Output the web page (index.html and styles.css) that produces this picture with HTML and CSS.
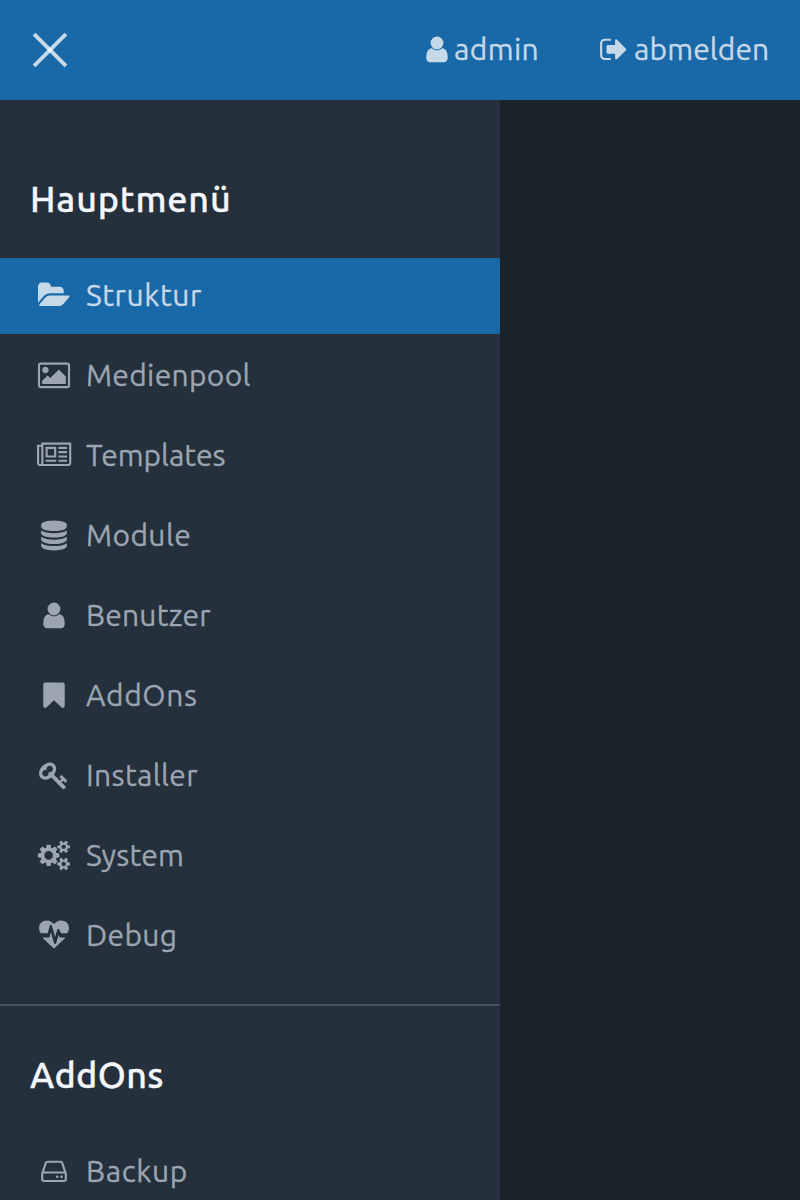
FILE: index.html
```
<!DOCTYPE html>
<html lang="de">
<head>
<meta charset="utf-8">
<title>Hauptmenü</title>
<link rel="stylesheet" href="styles.css">
</head>
<body>
<svg class="sprite" aria-hidden="true">
<symbol id="user" viewBox="0 0 1792 1792"><path d="M1536 1399q0 109-62.500 187t-150.500 78h-854q-88 0-150.500-78t-62.500-187q0-85 8.500-160.500t31.500-152 58.500-131 94-89 134.500-34.500q131 128 313 128t313-128q76 0 134.500 34.500t94 89 58.500 131 31.500 152 8.500 160.500zm-256-887q0 159-112.500 271.500t-271.500 112.500-271.500-112.500-112.500-271.500 112.500-271.500 271.500-112.500 271.500 112.500 112.500 271.500z"/></symbol>
</svg>
<header class="topbar">
<button class="close" aria-label="Menü schließen"><svg viewBox="0 0 36 36"><path d="M3 3 33 33"/><path d="M33 3 3 33"/></svg></button>
<nav class="meta">
<a class="account"><svg class="icon"><use href="#user"/></svg><span class="t-admin">admin</span></a>
<a class="logout"><svg class="icon" viewBox="0 0 1792 1792"><path d="M704 1440q0 4 1 20t.5 26.500-3 23.500-10 19.500-20.500 6.500h-320q-119 0-203.500-84.500t-84.500-203.500v-704q0-119 84.500-203.500t203.500-84.500h320q13 0 22.500 9.500t9.500 22.500q0 4 1 20t.5 26.500-3 23.500-10 19.500-20.500 6.500h-320q-66 0-113 47t-47 113v704q0 66 47 113t113 47h312l11.500 1 11.500 3 8 5.500 7 9 2 13.500zm928-544q0 26-19 45l-544 544q-19 19-45 19t-45-19-19-45v-288h-448q-26 0-45-19t-19-45v-384q0-26 19-45t45-19h448v-288q0-26 19-45t45-19 45 19l544 544q19 19 19 45z"/></svg><span class="t-abmelden">abmelden</span></a>
</nav>
</header>
<div class="page">
<aside class="sidebar">
<section class="group">
<h2 class="t-hauptmenu">Hauptmenü</h2>
<ul>
<li><a class="item active"><svg class="icon i-folder" viewBox="0 0 1792 1792"><path d="M1879 952q0 31-31 66l-336 396q-43 51-120.500 86.500t-143.500 35.500h-1088q-34 0-60.500-13t-26.500-43q0-31 31-66l336-396q43-51 120.500-86.500t143.500-35.500h1088q34 0 60.500 13t26.500 43zm-343-344v160h-832q-94 0-197 47.500t-164 119.500l-337 396-5 6q0-4-.5-12.500t-.5-12.500v-960q0-92 66-158t158-66h320q92 0 158 66t66 158v32h544q92 0 158 66t66 158z"/></svg><span class="t-struktur">Struktur</span></a></li>
<li><a class="item"><svg class="icon" viewBox="0 0 1792 1792"><path d="M576 576q0 80-56 136t-136 56-136-56-56-136 56-136 136-56 136 56 56 136zm1024 384v448h-1408v-192l320-320 160 160 512-512zm96-704h-1600q-13 0-22.500 9.500t-9.500 22.500v1216q0 13 9.500 22.500t22.500 9.500h1600q13 0 22.500-9.500t9.500-22.500v-1216q0-13-9.500-22.500t-22.500-9.500zm160 32v1216q0 66-47 113t-113 47h-1600q-66 0-113-47t-47-113v-1216q0-66 47-113t113-47h1600q66 0 113 47t47 113z"/></svg><span class="t-medienpool">Medienpool</span></a></li>
<li><a class="item"><svg class="icon i-news" viewBox="0 0 1792 1792"><path d="M1024 512h-384v384h384v-384zm128 640v128h-640v-128h640zm0-768v640h-640v-640h640zm640 768v128h-512v-128h512zm0-256v128h-512v-128h512zm0-256v128h-512v-128h512zm0-256v128h-512v-128h512zm-1536 960v-960h-128v960q0 26 19 45t45 19 45-19 19-45zm1664 0v-1088h-1536v1088q0 33-11 64h1483q26 0 45-19t19-45zm128-1216v1216q0 80-56 136t-136 56h-1664q-80 0-136-56t-56-136v-1088h256v-128h1792z"/></svg><span class="t-templates">Templates</span></a></li>
<li><a class="item"><svg class="icon" viewBox="0 0 1792 1792"><path d="M896 768q237 0 443-43t325-127v170q0 69-103 128t-280 93.500-385 34.500-385-34.500-280-93.500-103-128v-170q119 84 325 127t443 43zm0 768q237 0 443-43t325-127v170q0 69-103 128t-280 93.500-385 34.500-385-34.500-280-93.500-103-128v-170q119 84 325 127t443 43zm0-384q237 0 443-43t325-127v170q0 69-103 128t-280 93.500-385 34.500-385-34.500-280-93.500-103-128v-170q119 84 325 127t443 43zm0-1152q208 0 385 34.500t280 93.500 103 128v128q0 69-103 128t-280 93.500-385 34.500-385-34.500-280-93.500-103-128v-128q0-69 103-128t280-93.500 385-34.500z"/></svg><span class="t-module">Module</span></a></li>
<li><a class="item"><svg class="icon"><use href="#user"/></svg><span class="t-benutzer">Benutzer</span></a></li>
<li><a class="item"><svg class="icon" viewBox="0 0 1792 1792"><path d="M1420 128q23 0 44 9 33 13 52.500 41t19.500 62v1289q0 34-19.500 62t-52.500 41q-19 8-44 8-48 0-83-32l-441-424-441 424q-36 33-83 33-23 0-44-9-33-13-52.500-41t-19.500-62v-1289q0-34 19.500-62t52.500-41q21-9 44-9h1048z"/></svg><span class="t-addons">AddOns</span></a></li>
<li><a class="item"><svg class="icon" viewBox="0 0 1792 1792"><path d="M832 512q0-80-56-136t-136-56-136 56-56 136q0 42 19 83-41-19-83-19-80 0-136 56t-56 136 56 136 136 56 136-56 56-136q0-42-19-83 41 19 83 19 80 0 136-56t56-136zm851 704q0 17-49 66t-66 49q-9 0-28.500-16t-36.500-33-38.500-40-24.500-26l-96 96 220 220q28 28 28 68 0 42-39 81t-81 39q-40 0-68-28l-671-671q-176 131-365 131-163 0-265.500-102.500t-102.500-265.500q0-160 95-313t248-248 313-95q163 0 265.500 102.500t102.500 265.500q0 189-131 365l355 355 96-96q-3-3-26-24.500t-40-38.500-33-36.500-16-28.500q0-17 49-66t66-49q13 0 23 10 6 6 46 44.500t82 79.500 86.500 86 73 78 28.500 41z"/></svg><span class="t-installer">Installer</span></a></li>
<li><a class="item"><svg class="icon" viewBox="0 0 1792 1792"><path d="M832 896q0-106-75-181t-181-75-181 75-75 181 75 181 181 75 181-75 75-181zm768 512q0-52-38-90t-90-38-90 38-38 90q0 53 37.500 90.500t90.500 37.500 90.500-37.500 37.500-90.500zm0-1024q0-52-38-90t-90-38-90 38-38 90q0 53 37.500 90.500t90.500 37.500 90.500-37.500 37.500-90.500zm-384 421v185q0 10-7 19.500t-16 10.500l-155 24q-11 35-32 76 34 48 90 115 7 11 7 20 0 12-7 19-23 30-82.500 89.500t-78.500 59.500q-11 0-21-7l-115-90q-37 19-77 31-11 108-23 155-7 24-30 24h-186q-11 0-20-7.500t-10-17.500l-23-153q-34-10-75-31l-118 89q-7 7-20 7-11 0-21-8-144-133-144-160 0-9 7-19 10-14 41-53t47-61q-23-44-35-82l-152-24q-10-1-17-9.500t-7-19.500v-185q0-10 7-19.500t16-10.500l155-24q11-35 32-76-34-48-90-115-7-11-7-20 0-12 7-20 22-30 82-89t79-59q11 0 21 7l115 90q34-18 77-32 11-108 23-154 7-24 30-24h186q11 0 20 7.500t10 17.500l23 153q34 10 75 31l118-89q8-7 20-7 11 0 21 8 144 133 144 160 0 8-7 19-12 16-42 54t-45 60q23 48 34 82l152 23q10 2 17 10.500t7 19.500zm640 533v140q0 16-149 31-12 27-30 52 51 113 51 138 0 4-4 7-122 71-124 71-8 0-46-47t-52-68q-20 2-30 2t-30-2q-14 21-52 68t-46 47q-2 0-124-71-4-3-4-7 0-25 51-138-18-25-30-52-149-15-149-31v-140q0-16 149-31 13-29 30-52-51-113-51-138 0-4 4-7 4-2 35-20t59-34 30-16q8 0 46 46.500t52 67.500q20-2 30-2t30 2q51-71 92-112l6-2q4 0 124 70 4 3 4 7 0 25-51 138 17 23 30 52 149 15 149 31zm0-1024v140q0 16-149 31-12 27-30 52 51 113 51 138 0 4-4 7-122 71-124 71-8 0-46-47t-52-68q-20 2-30 2t-30-2q-14 21-52 68t-46 47q-2 0-124-71-4-3-4-7 0-25 51-138-18-25-30-52-149-15-149-31v-140q0-16 149-31 13-29 30-52-51-113-51-138 0-4 4-7 4-2 35-20t59-34 30-16q8 0 46 46.500t52 67.500q20-2 30-2t30 2q51-71 92-112l6-2q4 0 124 70 4 3 4 7 0 25-51 138 17 23 30 52 149 15 149 31z"/></svg><span class="t-system">System</span></a></li>
<li><a class="item"><svg class="icon" viewBox="0 0 1792 1792"><path d="M1280 1024h305q-5 6-10 10.500t-9 7.500l-3 4-623 600q-18 18-44 18t-44-18l-624-602q-5-2-21-20h369q22 0 39.500-13.500t22.500-34.500l70-281 190 667q6 20 23 33t39 13q21 0 38-13t23-33l146-485 56 112q18 35 57 35zm512-556q0 145-103 300h-369l-111-221q-8-17-25.500-27t-36.500-8q-45 5-56 46l-129 430-196-686q-6-20-23.500-33t-39.500-13-39 13.500-22 34.500l-116 464h-423q-103-155-103-300 0-220 127-344t351-124q62 0 126.500 21.500t120 58 95.500 68.500 76 68q36-36 76-68t95.500-68.500 120-58 126.500-21.500q224 0 351 124t127 344z"/></svg><span class="t-debug">Debug</span></a></li>
</ul>
</section>
<section class="group">
<h2 class="t-addons-title">AddOns</h2>
<ul>
<li><a class="item"><svg class="icon" viewBox="0 0 1792 1792"><path d="M1168 1216q0 33-23.500 56.500t-56.500 23.500-56.500-23.500-23.500-56.500 23.500-56.500 56.500-23.500 56.500 23.500 23.500 56.500zm256 0q0 33-23.500 56.500t-56.500 23.500-56.500-23.500-23.500-56.500 23.500-56.500 56.500-23.500 56.500 23.500 23.500 56.500zm112 160v-320q0-13-9.500-22.500t-22.500-9.500h-1216q-13 0-22.500 9.500t-9.500 22.500v320q0 13 9.500 22.500t22.500 9.500h1216q13 0 22.500-9.500t9.500-22.500zm-1230-480h1180l-157-482q-4-13-16-21.500t-26-8.500h-782q-14 0-26 8.500t-16 21.500zm1358 160v320q0 66-47 113t-113 47h-1216q-66 0-113-47t-47-113v-320q0-25 16-75l197-606q17-53 63-86t101-33h782q55 0 101 33t63 86l197 606q16 50 16 75z"/></svg><span class="t-backup">Backup</span></a></li>
</ul>
</section>
</aside>
</div>
</body>
</html>
```
FILE: styles.css
```
* { box-sizing: border-box; }
body { margin: 0; height: 1200px; overflow: hidden; background: #1b232a; font: 400 30px/40px Ubuntu, "Noto Sans", sans-serif; }
ul { list-style: none; margin: 0; padding: 0; display: flex; flex-direction: column; gap: 4px; }
.sprite { display: none; }
.topbar { height: 100px; background: #1968a8; color: #c6d9e9; display: flex; align-items: center; justify-content: space-between; padding: 0 31px 0 32px; }
.close { width: 36px; height: 36px; padding: 0; border: 0; background: none; }
.close svg { display: block; width: 36px; height: 36px; fill: none; stroke: rgba(255, 255, 255, .75); stroke-width: 4; stroke-linecap: square; }
.close path { transform: scale(.97); transform-origin: center; }
.meta { display: flex; padding-bottom: 2px; }
.account { display: flex; align-items: center; width: 177px; gap: 2px; }
.logout { display: flex; align-items: center; width: 170px; gap: 5px; }
.icon { flex: none; width: 30px; height: 30px; fill: currentColor; overflow: visible; transform: translateY(.4px); }
.page { height: 1100px; overflow: hidden; }
.sidebar { width: 500px; height: 1100px; overflow: hidden; background: #24303b; color: #9ca5b2; }
.group { padding-top: 79px; height: 904px; }
.group + .group { padding-top: 49px; border-top: 2px solid #47525e; height: auto; }
h2 { margin: 0 0 39px 30px; color: #f3f6fb; font-weight: 500; font-size: 36px; line-height: 40px; }
.item { display: flex; align-items: center; height: 76px; padding: 0 0 2px 39px; gap: 17px; }
.active { background: #1968a8; color: #c6d9e9; }
.item .i-folder { margin: 0 1px 0 -1px; }
.item .i-news { margin: 0 2px 0 -2px; }
span, h2 { white-space: nowrap; -webkit-text-stroke: .3px currentColor; }

/* label tracking */
.t-admin { letter-spacing: .35px; }
.t-abmelden { letter-spacing: .1px; }
.t-hauptmenu { letter-spacing: .82px; }
.t-struktur { letter-spacing: .55px; }
.t-medienpool { letter-spacing: .3px; }
.t-templates { letter-spacing: -.05px; }
.t-module { letter-spacing: .4px; }
.t-benutzer { letter-spacing: .2px; }
.t-addons { letter-spacing: .6px; }
.t-installer { letter-spacing: .37px; }
.t-system { letter-spacing: .2px; }
.t-debug { letter-spacing: .35px; }
.t-addons-title { letter-spacing: .36px; }
.t-backup { letter-spacing: .6px; }
```
